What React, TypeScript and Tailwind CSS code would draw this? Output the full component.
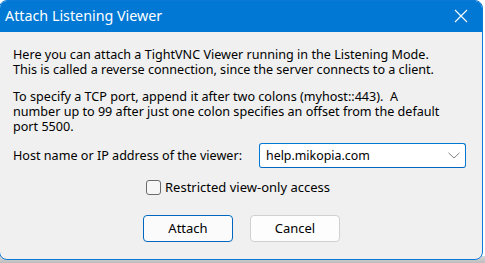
import React from "react";

export default function App() {
  const font = { fontFamily: '"Noto Sans", "Open Sans", sans-serif' };
  return (
    <div className="w-[485px] h-[263px] bg-white relative overflow-hidden" style={font}>
      <div className="absolute left-0 right-0 top-[256px] bottom-0 bg-gradient-to-b from-[#d8d8d8] to-[#bdbdbd]" />
      <div className="relative ml-[-1px] w-[484px] h-[260px] rounded-[8px] border border-[#0b79d8] bg-[#f0f0f0] overflow-hidden flex flex-col">
        <div className="h-[31px] bg-[#0078d4] flex items-start justify-between pl-[5px] pr-[13px] pt-[7px] shrink-0">
          <span className="text-white text-[14.3px] leading-[16px]">Attach Listening Viewer</span>
          <svg width="16" height="16" viewBox="0 0 16 16">
            <path d="M2 2 L14 14 M14 2 L2 14" stroke="white" strokeWidth="1.1" fill="none" />
          </svg>
        </div>
        <div className="flex flex-col pl-[13px] pr-[14px] pt-[15px] text-[12.6px] leading-[15px] text-black">
          <div>Here you can attach a TightVNC Viewer running in the Listening Mode.</div>
          <div>This is called a reverse connection, since the server connects to a client.</div>
          <div className="mt-[12px]">To specify a TCP port, append it after two colons (myhost::443).&nbsp; A</div>
          <div>number up to 99 after just one colon specifies an offset from the default</div>
          <div>port 5500.</div>
          <div className="flex items-center mt-[9px]">
            <span className="w-[246px]">Host name or IP address of the viewer:</span>
            <div className="w-[207px] h-[25px] bg-white border border-[#0078d4] border-b-[#0067c0] rounded-[3px] flex items-center justify-between pl-[6px] pr-[5px]">
              <span className="text-[12.4px]">help.mikopia.com</span>
              <svg width="12" height="7" viewBox="0 0 12 7">
                <path d="M0.5 0.8 L6 6 L11.5 0.8" stroke="#808080" strokeWidth="1" fill="none" />
              </svg>
            </div>
          </div>
          <div className="flex items-center mt-[12px] ml-[133px]">
            <div className="w-[15px] h-[15px] rounded-[3px] border border-[#6b6b6b] bg-[#f6f6f6]" />
            <span className="ml-[4px] text-[13px]">Restricted view-only access</span>
          </div>
          <div className="flex mt-[20px] ml-[130px] gap-[17px]">
            <div className="w-[90px] h-[27px] rounded-[4px] border border-[#0067c0] bg-[#fbfbfb] flex items-center justify-center text-[13px]">Attach</div>
            <div className="w-[90px] h-[27px] rounded-[4px] border border-[#d0d0d0] bg-[#fdfdfd] flex items-center justify-center text-[13px]">Cancel</div>
          </div>
        </div>
      </div>
    </div>
  );
}
